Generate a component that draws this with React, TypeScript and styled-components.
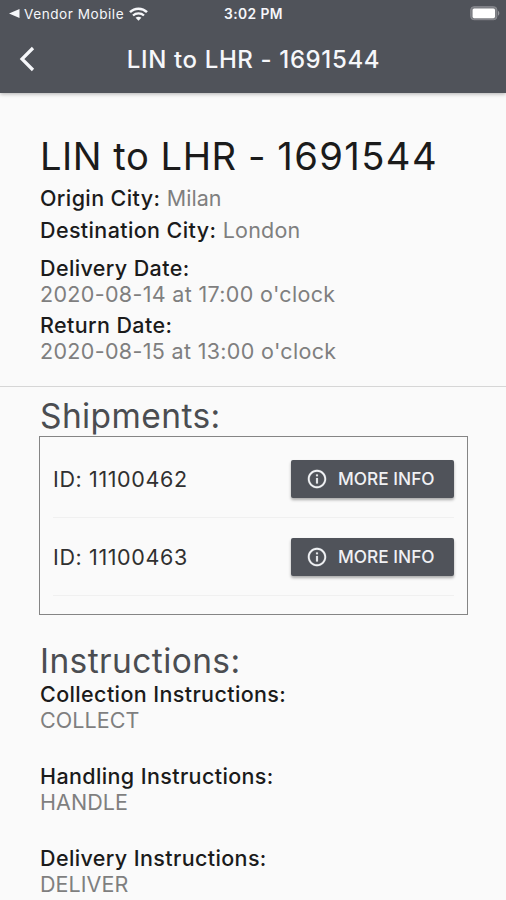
import React from 'react';
import styled, { createGlobalStyle } from 'styled-components';

const GlobalStyle = createGlobalStyle`
  * { box-sizing: border-box; }
  body {
    margin: 0;
    background: #fafafa;
    font-family: Inter, 'Liberation Sans', sans-serif;
    overflow: hidden;
  }
`;

const Screen = styled.div`
  height: 900px;
  overflow: hidden;
  background: #fafafa;
`;

const Header = styled.header`
  height: 93px;
  background: #50535a;
  color: #f6f7fa;
  box-shadow: 0 1px 4px rgba(0, 0, 0, 0.3);
`;

const StatusBar = styled.div`
  display: grid;
  grid-template-columns: 1fr auto 1fr;
  align-items: center;
  height: 27px;
  padding: 0 6px 0 9px;
`;

const Carrier = styled.div`
  display: flex;
  align-items: center;
  font-size: 13.6px;
  letter-spacing: 0.52px;
  white-space: nowrap;

  span { margin: 0 5px 0 4px; }
`;

const Clock = styled.div`
  font-size: 13.8px;
  font-weight: 600;
  letter-spacing: 0.4px;
  margin-left: -2px;
`;

const BatterySlot = styled.div`
  display: flex;
  justify-content: flex-end;
`;

const NavBar = styled.div`
  display: grid;
  grid-template-columns: 60px 1fr 60px;
  align-items: center;
  height: 64px;
`;

const BackButton = styled.button`
  display: flex;
  width: 40px;
  padding: 0 0 0 18px;
  border: 0;
  background: none;
  color: inherit;
`;

const NavTitle = styled.h1`
  margin: 0;
  padding: 2px 0 0 1px;
  font-size: 24px;
  font-weight: 500;
  line-height: 30px;
  letter-spacing: 0.62px;
  text-align: center;
  white-space: nowrap;
`;

const Section = styled.section<{ $top: number }>`
  padding: ${(p) => p.$top}px 39px 0 40px;
`;

const Summary = styled(Section)`
  height: 294px;
  border-bottom: 1px solid #d6d6d6;
`;

const Title = styled.h2`
  margin: 0 0 3px;
  color: #1b1b1b;
  font-size: 38.2px;
  font-weight: 400;
  line-height: 46px;
  letter-spacing: 0.5px;
  white-space: nowrap;
`;

const TitleNumber = styled.span`
  letter-spacing: 1.4px;
`;

const SectionTitle = styled.h3`
  margin: 0;
  color: #4b4d51;
  font-size: 33.5px;
  font-weight: 400;
  line-height: 40px;
  letter-spacing: 0.4px;
`;

const Field = styled.div<{ $line: number; $gap?: number }>`
  margin-bottom: ${(p) => p.$gap ?? 0}px;
  font-size: 21.5px;
  line-height: ${(p) => p.$line}px;
  letter-spacing: 0.38px;
  white-space: nowrap;
`;

const Label = styled.span`
  color: #1b1b1b;
  font-weight: 500;
`;

const Value = styled.span<{ $block?: boolean; $spacing?: number }>`
  display: ${(p) => (p.$block ? 'block' : 'inline')};
  color: #7f7f7f;
  font-weight: 400;
  letter-spacing: ${(p) => p.$spacing ?? 0.05}px;
`;

const ShipmentList = styled.div`
  height: 179px;
  margin: 0 -1px;
  padding: 3px 13px 0;
  border: 1px solid #858585;
`;

const ShipmentRow = styled.div`
  display: flex;
  align-items: center;
  justify-content: space-between;
  height: 78px;
  border-bottom: 1px solid #f0f0f0;
`;

const ShipmentId = styled.span`
  color: #303030;
  font-size: 21.5px;
  letter-spacing: 0.62px;
`;

const InfoButton = styled.button`
  display: flex;
  align-items: center;
  gap: 10px;
  width: 163px;
  height: 38px;
  padding: 0 0 0 15px;
  border: 0;
  border-radius: 2px;
  background: #50535a;
  box-shadow: 0 2px 3px rgba(0, 0, 0, 0.32);
  color: #f0f1f4;
  font: 500 17.3px Inter, sans-serif;
  letter-spacing: 0.02px;
  white-space: nowrap;
`;

const WifiIcon = () => (
  <svg width="19" height="14" viewBox="0 0 19 14" fill="none" stroke="currentColor">
    <path d="M1 5.2C5.7.6 13.3.6 18 5.2" strokeWidth="2.5" />
    <path d="M4 8.5C7 5.7 12 5.700 15 8.500" strokeWidth="2.3" />
    <path d="M6.600 10.800C8.400 9.300 10.600 9.300 12.400 10.800L9.500 13.800Z" fill="currentColor" stroke="none" />
  </svg>
);

const BatteryIcon = () => (
  <svg width="30" height="15" viewBox="0 0 30 15">
    <rect x=".7" y=".7" width="26.2" height="13" rx="3.2" fill="#7b7d82" stroke="#898b90" />
    <rect x="2.6" y="2.4" width="22.4" height="9.8" rx="1.6" fill="#fff" />
    <path d="M28 4.8C29.8 5.8 29.8 8.8 28 9.8Z" fill="#96989c" />
  </svg>
);

const InfoIcon = () => (
  <svg width="22" height="22" viewBox="0 0 24 24" fill="currentColor">
    <path d="M11 7h2v2h-2zm0 4h2v6h-2zm1-9C6.480 2 2 6.480 2 12s4.480 10 10 10 10-4.480 10-10S17.520 2 12 2zm0 18c-4.410 0-8-3.590-8-8s3.590-8 8-8 8 3.590 8 8-3.590 8-8 8z" stroke="currentColor" strokeWidth="0.2" />
  </svg>
);

const shipments = ['11100462', '11100463'];

const instructions = [
  { label: 'Collection Instructions:', value: 'COLLECT' },
  { label: 'Handling Instructions:', value: 'HANDLE' },
  { label: 'Delivery Instructions:', value: 'DELIVER' },
];

export default function App() {
  return (
    <Screen>
      <GlobalStyle />
      <Header>
        <StatusBar>
          <Carrier>
            <svg width="11" height="9" viewBox="0 0 11 9" fill="currentColor">
              <path d="M0 4.500L10.500 0V9Z" />
            </svg>
            <span>Vendor Mobile</span>
            <WifiIcon />
          </Carrier>
          <Clock>3:02 PM</Clock>
          <BatterySlot>
            <BatteryIcon />
          </BatterySlot>
        </StatusBar>
        <NavBar>
          <BackButton aria-label="Back">
            <svg width="18" height="26" viewBox="0 0 18 26" fill="none" stroke="currentColor" strokeWidth="3.200">
              <path d="M15 2L4 13L15 24" />
            </svg>
          </BackButton>
          <NavTitle>LIN to LHR - 1691544</NavTitle>
        </NavBar>
      </Header>
      <Summary $top={40}>
        <Title>
          LIN to LHR - <TitleNumber>1691544</TitleNumber>
        </Title>
        <Field $line={32}>
          <Label>Origin City:</Label> <Value>Milan</Value>
        </Field>
        <Field $line={32} $gap={9}>
          <Label>Destination City:</Label> <Value $spacing={0.2}>London</Value>
        </Field>
        <Field $line={26} $gap={5}>
          <Label>Delivery Date:</Label>
          <Value $block $spacing={0.33}>2020-08-14 at 17:00 o'clock</Value>
        </Field>
        <Field $line={26}>
          <Label>Return Date:</Label>
          <Value $block $spacing={0.33}>2020-08-15 at 13:00 o'clock</Value>
        </Field>
      </Summary>
      <Section $top={9}>
        <SectionTitle>Shipments:</SectionTitle>
        <ShipmentList>
          {shipments.map((id) => (
            <ShipmentRow key={id}>
              <ShipmentId>ID: {id}</ShipmentId>
              <InfoButton>
                <InfoIcon />
                MORE INFO
              </InfoButton>
            </ShipmentRow>
          ))}
        </ShipmentList>
      </Section>
      <Section $top={26}>
        <SectionTitle>Instructions:</SectionTitle>
        {instructions.map((item) => (
          <Field key={item.label} $line={26} $gap={30}>
            <Label>{item.label}</Label>
            <Value $block>{item.value}</Value>
          </Field>
        ))}
      </Section>
    </Screen>
  );
}
